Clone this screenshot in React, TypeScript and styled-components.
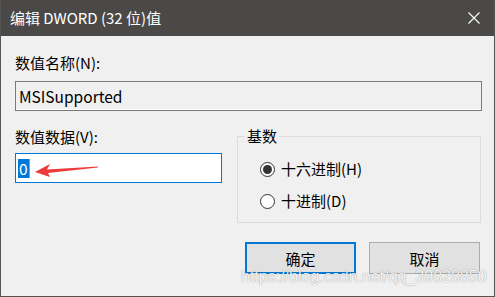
import React from 'react';
import styled, { createGlobalStyle } from 'styled-components';

const GlobalStyle = createGlobalStyle`
  html, body {
    margin: 0;
    padding: 0;
    background: #f0f0f0;
  }
  * {
    box-sizing: border-box;
  }
`;

const FONT = `"Noto Sans CJK SC", "Noto Sans", sans-serif`;

const Window = styled.div`
  position: relative;
  width: 495px;
  height: 297px;
  display: flex;
  flex-direction: column;
  border: 1px solid #555453;
  border-top: none;
  background: #f0f0f0;
  font-family: ${FONT};
  font-size: 15px;
  color: #000;
  overflow: hidden;
`;

const TitleBar = styled.div`
  height: 36px;
  flex: none;
  display: flex;
  align-items: center;
  justify-content: space-between;
  padding: 0 14px 0 9px;
  background: #4a4947;
  color: #ffffff;
  font-size: 15px;
`;

const Title = styled.span`
  line-height: 20px;
  margin-top: -1px;
`;

const CloseIcon = styled.svg`
  width: 12px;
  height: 12px;
  margin-top: -1px;
`;

const Body = styled.div`
  flex: 1;
  display: flex;
  flex-direction: column;
  padding: 17px 12px 0 14px;
`;

const Label = styled.div`
  line-height: 20px;
  height: 20px;
  white-space: nowrap;
`;

interface BoxProps {
  $focused?: boolean;
}

const TextBox = styled.div<BoxProps>`
  height: 30px;
  display: flex;
  align-items: center;
  padding-left: 3px;
  border: 1px solid ${({ $focused }) => ($focused ? '#0078d7' : '#7a7a7a')};
  background: ${({ $focused }) => ($focused ? '#ffffff' : '#f0f0f0')};
  font-size: 15.5px;
  position: relative;
`;

const NameBox = styled(TextBox)`
  margin-top: 8px;
  box-shadow: inset 0 -1px 0 #ffffff;
`;

const MiddleRow = styled.div`
  display: flex;
  margin-top: 16px;
`;

const DataColumn = styled.div`
  width: 207px;
  display: flex;
  flex-direction: column;
`;

const DataBox = styled(TextBox)`
  margin-top: 6px;
  width: 207px;
  padding-left: 2px;
`;

const Selected = styled.span`
  display: inline-block;
  background: #0078d7;
  color: #ffffff;
  line-height: 19px;
  height: 19px;
  padding: 0 1px;
  border-right: 1px solid #f08a1a;
`;

const Arrow = styled.svg`
  position: absolute;
  left: 19px;
  top: 9px;
  width: 64px;
  height: 15px;
`;

const GroupBox = styled.fieldset`
  margin: 0 0 0 15px;
  padding: 14px 0 0 0;
  width: 244px;
  height: 96px;
  border: 1px solid #dcdcdc;
  display: flex;
  flex-direction: column;
  gap: 12px;
`;

const Legend = styled.legend`
  margin-left: 7px;
  padding: 0 2px;
  line-height: 18px;
  font-size: 15px;
`;

const RadioRow = styled.div`
  display: flex;
  align-items: center;
  gap: 6px;
  height: 20px;
  line-height: 20px;
  margin-left: 22px;
`;

interface RadioProps {
  $checked?: boolean;
}

const RadioCircle = styled.span<RadioProps>`
  width: 15px;
  height: 15px;
  border-radius: 50%;
  border: 1px solid #333333;
  background: #ffffff;
  display: flex;
  align-items: center;
  justify-content: center;
  flex: none;

  &::after {
    content: '';
    width: 9px;
    height: 9px;
    border-radius: 50%;
    background: ${({ $checked }) => ($checked ? '#333333' : 'transparent')};
  }
`;

const ButtonRow = styled.div`
  display: flex;
  justify-content: flex-end;
  gap: 13px;
  margin-top: 19px;
  padding-right: 2px;
`;

interface ButtonProps {
  $default?: boolean;
}

const Button = styled.button<ButtonProps>`
  width: 111px;
  height: 32px;
  margin: 0;
  padding: 0;
  font-family: ${FONT};
  font-size: 15px;
  color: #000;
  background: #e1e1e1;
  border: ${({ $default }) => ($default ? '2px solid #0078d7' : '1px solid #adadad')};
`;

const Watermark = styled.div`
  position: absolute;
  left: 240px;
  top: 268px;
  font-family: "Liberation Sans", Arial, sans-serif;
  font-size: 16px;
  line-height: 18px;
  color: rgba(255, 255, 255, 0.9);
  text-shadow: 0 0 1px rgba(0, 0, 0, 0.35), 0 0 2px rgba(0, 0, 0, 0.12);
  white-space: nowrap;
  pointer-events: none;
`;

function Radio({ checked, label }: { checked?: boolean; label: string }): JSX.Element {
  return (
    <RadioRow>
      <RadioCircle $checked={checked} />
      <span>{label}</span>
    </RadioRow>
  );
}

function App(): JSX.Element {
  return (
    <>
      <GlobalStyle />
      <Window>
        <TitleBar>
          <Title>编辑 DWORD (32 位)值</Title>
          <CloseIcon viewBox="0 0 12 12">
            <path d="M0.5 0.5 L11.5 11.5 M11.5 0.5 L0.5 11.5" stroke="#ffffff" strokeWidth="1.1" fill="none" />
          </CloseIcon>
        </TitleBar>

        <Body>
          <Label>数值名称(N):</Label>
          <NameBox>MSISupported</NameBox>

          <MiddleRow>
            <DataColumn>
              <Label>数值数据(V):</Label>
              <DataBox $focused>
                <Selected>0</Selected>
                <Arrow viewBox="0 0 64 15">
                  <polygon
                    points="0,9 15,1 12,6.5 63,3.5 63,4.5 13,10 15,14"
                    fill="#ec3b3b"
                  />
                </Arrow>
              </DataBox>
            </DataColumn>

            <GroupBox>
              <Legend>基数</Legend>
              <Radio checked label="十六进制(H)" />
              <Radio label="十进制(D)" />
            </GroupBox>
          </MiddleRow>

          <ButtonRow>
            <Button $default>确定</Button>
            <Button>取消</Button>
          </ButtonRow>
        </Body>

        <Watermark>https://blog.csdn.net/qq_39828850</Watermark>
      </Window>
    </>
  );
}

export default App;
